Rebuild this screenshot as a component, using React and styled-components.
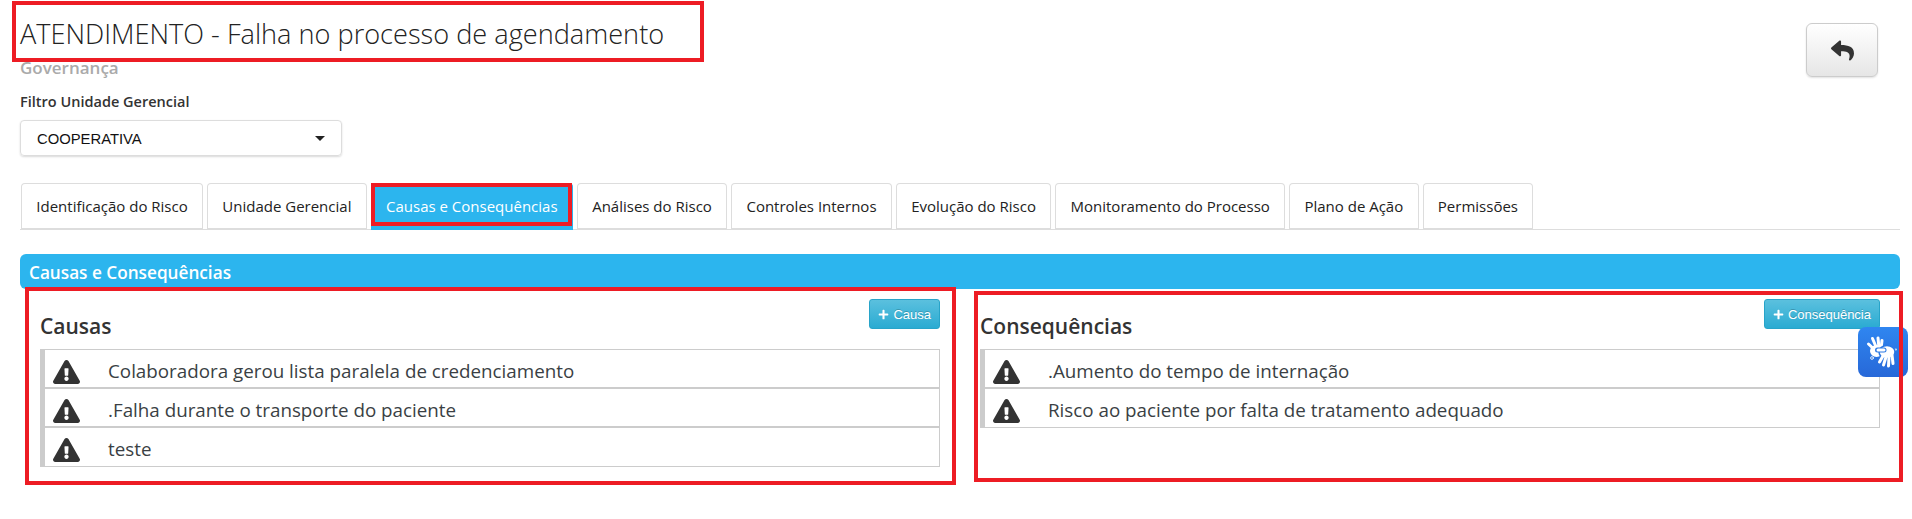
import styled, { createGlobalStyle } from "styled-components";
import { FaExclamationTriangle, FaPlus, FaReply } from "react-icons/fa";

const GlobalStyle = createGlobalStyle`
  html, body {
    margin: 0;
    padding: 0;
    height: 519px;
    overflow: hidden;
    background: #fff;
    font-family: "Open Sans", sans-serif;
    color: #333;
  }
`;

const tabs = [
  "Identificação do Risco",
  "Unidade Gerencial",
  "Causas e Consequências",
  "Análises do Risco",
  "Controles Internos",
  "Evolução do Risco",
  "Monitoramento do Processo",
  "Plano de Ação",
  "Permissões",
];

const causas = [
  "Colaboradora gerou lista paralela de credenciamento",
  ".Falha durante o transporte do paciente",
  "teste",
];

const consequencias = [
  ".Aumento do tempo de internação",
  "Risco ao paciente por falta de tratamento adequado",
];

const Page = styled.div`
  position: relative;
  width: 1912px;
  height: 519px;
  box-sizing: border-box;
  padding: 0 12px 0 20px;
`;

const Header = styled.header`
  display: flex;
  justify-content: space-between;
  align-items: flex-start;
  height: 120px;
`;

const TitleBlock = styled.div`
  display: flex;
  flex-direction: column;
`;

const Title = styled.h1`
  margin: 16px 0 0;
  font-size: 27.15px;
  line-height: 36px;
  font-weight: 300;
  color: #222;
`;

const Subtitle = styled.div`
  margin-top: 5px;
  font-size: 17px;
  line-height: 22px;
  font-weight: 600;
  color: #aaa;
`;

const FilterLabel = styled.label`
  margin-top: 13px;
  font-size: 14.5px;
  line-height: 20px;
  font-weight: 600;
  color: #333;
`;

const BackButton = styled.button`
  margin: 23px 22px 0 0;
  width: 72px;
  height: 54px;
  display: flex;
  align-items: center;
  justify-content: center;
  border: 1px solid #ccc;
  border-radius: 6px;
  background: linear-gradient(to bottom, #fff, #e6e6e6);
  box-shadow: 0 1px 2px rgba(0, 0, 0, 0.12);
  color: #333;
  font-size: 23px;
  padding: 0;
`;

const Select = styled.div`
  width: 322px;
  height: 36px;
  margin: 8px 0 0 0;
  box-sizing: border-box;
  display: flex;
  align-items: center;
  justify-content: space-between;
  padding: 1px 16px 0;
  border: 1px solid #ddd;
  border-radius: 4px;
  box-shadow: 0 1px 2px rgba(0, 0, 0, 0.15);
  font-family: "Liberation Sans", Arial, sans-serif;
  font-size: 14.8px;
  color: #111;
`;

const Caret = styled.span`
  width: 0;
  height: 0;
  border-left: 5px solid transparent;
  border-right: 5px solid transparent;
  border-top: 5px solid #222;
`;

const TabBar = styled.nav`
  display: flex;
  gap: 4px;
  margin-top: 63px;
  padding-left: 1px;
  height: 46px;
  border-bottom: 1px solid #ddd;
`;

const Tab = styled.div`
  box-sizing: border-box;
  height: 47px;
  padding: 0 14.3px;
  display: flex;
  align-items: center;
  font-size: 15px;
  white-space: nowrap;
  border: 1px solid ${({ $active }) => ($active ? "#2cb5ee" : "#ddd")};
  border-bottom: 2px solid ${({ $active }) => ($active ? "#2cb5ee" : "#ddd")};
  border-radius: 4px 4px 0 0;
  background: ${({ $active }) => ($active ? "#2cb5ee" : "#fff")};
  color: ${({ $active }) => ($active ? "#fff" : "#222")};
`;

const SectionBar = styled.div`
  margin-top: 24px;
  height: 35px;
  box-sizing: border-box;
  display: flex;
  align-items: center;
  padding: 1px 0 0 9px;
  border-radius: 6px;
  background: #2cb5ee;
  color: #fff;
  font-size: 17.2px;
  font-weight: 600;
`;

const Columns = styled.div`
  display: grid;
  grid-template-columns: 900px 900px;
  column-gap: 40px;
  padding: 10px 20px 0 20px;
`;

const PanelHead = styled.div`
  display: flex;
  justify-content: space-between;
  align-items: flex-start;
  height: 50px;
`;

const PanelTitle = styled.h2`
  margin: 13px 0 0;
  font-size: 21px;
  line-height: 28px;
  font-weight: 600;
  color: #333;
`;

const AddButton = styled.button`
  height: 30px;
  display: inline-flex;
  align-items: center;
  gap: 4px;
  padding: 0 8px;
  border: 1px solid #28a4c9;
  border-radius: 3px;
  background: linear-gradient(to bottom, #5bc0de, #2aabd2);
  color: #fff;
  font-family: "Liberation Sans", Arial, sans-serif;
  font-size: 13px;
  text-shadow: 0 -1px 0 rgba(0, 0, 0, 0.2);
`;

const List = styled.ul`
  margin: 0;
  padding: 0;
  list-style: none;
  border-top: 1px solid #ccc;
`;

const Row = styled.li`
  box-sizing: border-box;
  height: 39px;
  display: flex;
  align-items: center;
  gap: 28px;
  padding: 6px 0 0 8px;
  border-left: 5px solid #ccc;
  border-right: 1px solid #ccc;
  border-bottom: ${({ $last }) => ($last ? "1px" : "2px")} solid #ccc;
  font-size: 18.8px;
  color: #3a3f44;
  white-space: nowrap;
`;

const RowText = styled.span`
  padding-bottom: 2px;
`;

const WarnIcon = styled(FaExclamationTriangle)`
  width: 27px;
  height: 24px;
  flex: none;
  color: #333;
`;

const Annotation = styled.div`
  position: absolute;
  left: ${({ $x }) => $x}px;
  top: ${({ $y }) => $y}px;
  width: ${({ $w }) => $w}px;
  height: ${({ $h }) => $h}px;
  box-sizing: border-box;
  border: 4px solid #ed1c24;
  pointer-events: none;
`;

const LibrasButton = styled.div`
  position: absolute;
  left: 1858px;
  top: 327px;
  width: 50px;
  height: 50px;
  border-radius: 8px;
  background: linear-gradient(to bottom, #2f86f0, #2768d8);
`;

// two open hands, one over the other
const HandsIcon = () => (
  <svg width="50" height="50" viewBox="0 0 50 50" fill="none" strokeLinecap="round">
    <g stroke="#fff" strokeWidth="3">
      <path d="M18 24 L10.5 17" />
      <path d="M19 22 L14.5 11.5" />
      <path d="M21 21 L20 11" />
      <path d="M23 22 L24 13.5" />
    </g>
    <ellipse cx="18.5" cy="24" rx="6.5" ry="6" fill="#fff" />
    <circle cx="14" cy="31" r="1.4" stroke="#fff" strokeWidth="0.8" />
    <path d="M36 23 L38 22.5" stroke="#fff" strokeWidth="2" opacity="0.7" />
    <ellipse cx="29" cy="25" rx="8" ry="6.5" fill="#fff" stroke="#2a78e4" strokeWidth="1.5" />
    <path d="M26 23 L19.5 23" stroke="#2a78e4" strokeWidth="5" />
    <g stroke="#fff" strokeWidth="3">
      <path d="M26 23 L20 23" />
      <path d="M25 29 L21.5 35" />
      <path d="M28 30 L25.5 38" />
      <path d="M31 30 L30.5 39" />
      <path d="M34 28 L35 36.5" />
    </g>
  </svg>
);

function Panel({ title, action, items }) {
  return (
    <section>
      <PanelHead>
        <PanelTitle>{title}</PanelTitle>
        <AddButton>
          <FaPlus size={11} />
          {action}
        </AddButton>
      </PanelHead>
      <List>
        {items.map((item, i) => (
          <Row key={item} $last={i === items.length - 1}>
            <WarnIcon />
            <RowText>{item}</RowText>
          </Row>
        ))}
      </List>
    </section>
  );
}

export default function App() {
  return (
    <Page>
      <GlobalStyle />
      <Header>
        <TitleBlock>
          <Title>ATENDIMENTO - Falha no processo de agendamento</Title>
          <Subtitle>Governança</Subtitle>
          <FilterLabel>Filtro Unidade Gerencial</FilterLabel>
          <Select>
            COOPERATIVA
            <Caret />
          </Select>
        </TitleBlock>
        <BackButton aria-label="Voltar">
          <FaReply />
        </BackButton>
      </Header>
      <TabBar>
        {tabs.map((tab) => (
          <Tab key={tab} $active={tab === "Causas e Consequências"}>
            {tab}
          </Tab>
        ))}
      </TabBar>
      <SectionBar>Causas e Consequências</SectionBar>
      <Columns>
        <Panel title="Causas" action="Causa" items={causas} />
        <Panel title="Consequências" action="Consequência" items={consequencias} />
      </Columns>

      <LibrasButton>
        <HandsIcon />
      </LibrasButton>
      <Annotation $x={12} $y={1} $w={692} $h={61} />
      <Annotation $x={371} $y={183} $w={201} $h={43} />
      <Annotation $x={25} $y={287} $w={931} $h={198} />
      <Annotation $x={974} $y={291} $w={929} $h={191} />
    </Page>
  );
}
